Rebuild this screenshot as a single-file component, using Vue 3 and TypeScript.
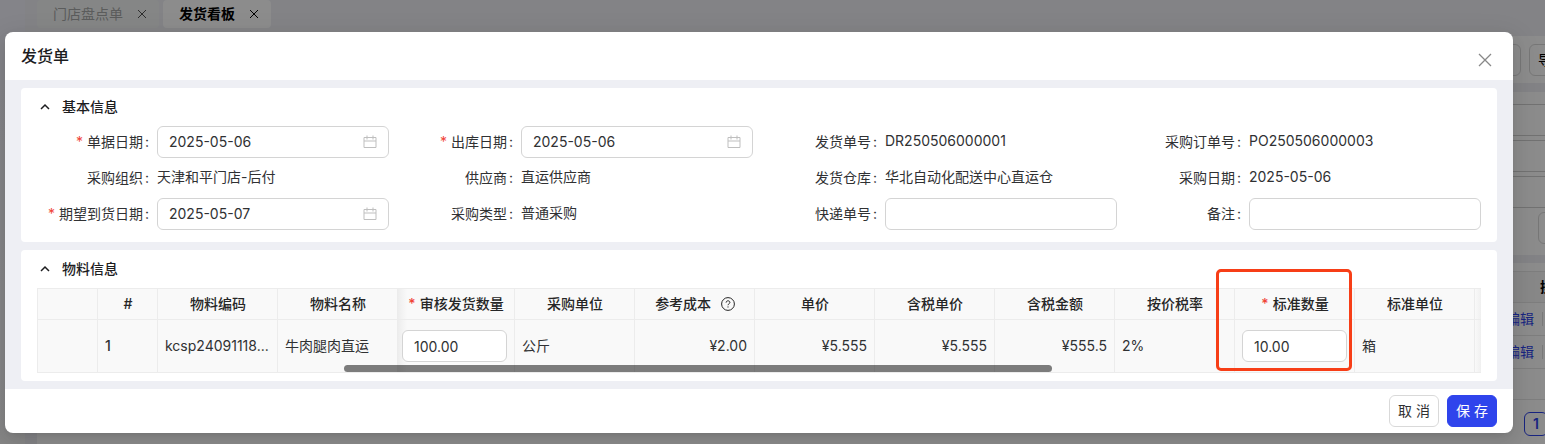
<script setup lang="ts">
import { reactive } from 'vue'

interface Field {
  key: string
  label: string
  value: string
  kind: 'date' | 'input' | 'text'
  required?: boolean
}

interface Column {
  key: string
  title: string
  width?: number
  align?: 'left' | 'right'
  required?: boolean
  help?: boolean
  input?: boolean
}

const fields = reactive<Field[]>([
  { key: 'billDate', label: '单据日期', value: '2025-05-06', kind: 'date', required: true },
  { key: 'outDate', label: '出库日期', value: '2025-05-06', kind: 'date', required: true },
  { key: 'deliveryNo', label: '发货单号', value: 'DR250506000001', kind: 'text' },
  { key: 'purchaseNo', label: '采购订单号', value: 'PO250506000003', kind: 'text' },
  { key: 'org', label: '采购组织', value: '天津和平门店-后付', kind: 'text' },
  { key: 'supplier', label: '供应商', value: '直运供应商', kind: 'text' },
  { key: 'warehouse', label: '发货仓库', value: '华北自动化配送中心直运仓', kind: 'text' },
  { key: 'purchaseDate', label: '采购日期', value: '2025-05-06', kind: 'text' },
  { key: 'expectDate', label: '期望到货日期', value: '2025-05-07', kind: 'date', required: true },
  { key: 'purchaseType', label: '采购类型', value: '普通采购', kind: 'text' },
  { key: 'expressNo', label: '快递单号', value: '', kind: 'input' },
  { key: 'remark', label: '备注', value: '', kind: 'input' },
])

const columns: Column[] = [
  { key: 'select', title: '', width: 61 },
  { key: 'index', title: '#', width: 60 },
  { key: 'code', title: '物料编码', width: 120 },
  { key: 'name', title: '物料名称', width: 120 },
  { key: 'auditQty', title: '审核发货数量', width: 117, required: true, input: true },
  { key: 'unit', title: '采购单位', width: 120 },
  { key: 'cost', title: '参考成本', width: 120, align: 'right', help: true },
  { key: 'price', title: '单价', width: 120, align: 'right' },
  { key: 'taxPrice', title: '含税单价', width: 120, align: 'right' },
  { key: 'taxAmount', title: '含税金额', width: 120, align: 'right' },
  { key: 'taxRate', title: '按价税率', width: 120 },
  { key: 'stdQty', title: '标准数量', width: 120, required: true, input: true },
  { key: 'stdUnit', title: '标准单位', width: 120 },
  { key: 'action', title: '' },
]

const rows = reactive<Record<string, string>[]>([
  {
    select: '',
    index: '1',
    code: 'kcsp24091118...',
    name: '牛肉腿肉直运',
    auditQty: '100.00',
    unit: '公斤',
    cost: '¥2.00',
    price: '¥5.555',
    taxPrice: '¥5.555',
    taxAmount: '¥555.5',
    taxRate: '2%',
    stdQty: '10.00',
    stdUnit: '箱',
    action: '',
  },
])
</script>

<template>
  <div class="app">
    <div class="page">
      <aside class="sidebar"></aside>
      <div class="workspace">
        <nav class="tabs">
          <div class="tab">
            <span>门店盘点单</span>
            <svg viewBox="0 0 10 10"><path d="M1 1l8 8M9 1l-8 8" /></svg>
          </div>
          <div class="tab active">
            <span>发货看板</span>
            <svg viewBox="0 0 10 10"><path d="M1 1l8 8M9 1l-8 8" /></svg>
          </div>
        </nav>
        <div class="panel toolbar">
          <button type="button" class="btn"></button>
          <button type="button" class="btn">导</button>
        </div>
        <div class="panel filters">
          <div class="filter-line"></div>
          <div class="filter-line"></div>
          <div class="filter-line"></div>
          <button type="button" class="btn"></button>
        </div>
        <div class="panel list">
          <div class="list-row head"><span>操</span></div>
          <div class="list-row"><a href="#">编辑</a><i></i></div>
          <div class="list-row"><a href="#">编辑</a><i></i></div>
          <div class="list-row last"></div>
          <div class="pager">
            <svg viewBox="0 0 10 10"><path d="M7 1L3 5l4 4" /></svg>
            <button type="button">1</button>
          </div>
        </div>
      </div>
    </div>

    <div class="mask">
      <section class="modal" role="dialog" aria-labelledby="modal-title">
        <header class="modal-header">
          <h1 id="modal-title">发货单</h1>
          <button type="button" class="close" aria-label="关闭">
            <svg viewBox="0 0 14 14"><path d="M1 1l12 12M13 1L1 13" /></svg>
          </button>
        </header>

        <div class="modal-body">
          <section class="card basic">
            <button type="button" class="card-title">
              <svg viewBox="0 0 10 10"><path d="M1 7l4-4 4 4" /></svg>
              <span>基本信息</span>
            </button>
            <form class="form">
              <div v-for="f in fields" :key="f.key" class="field">
                <component :is="f.kind === 'text' ? 'span' : 'label'" class="label" :for="f.kind === 'text' ? undefined : f.key">
                  <em v-if="f.required">*</em>{{ f.label }}<b>:</b>
                </component>
                <span v-if="f.kind === 'text'" class="value">{{ f.value }}</span>
                <div v-else class="control">
                  <input :id="f.key" v-model="f.value" type="text" />
                  <svg v-if="f.kind === 'date'" viewBox="0 0 14 14">
                    <path d="M1 2.5h12v10H1zM1 6h12M4 .5v4M10 .5v4" />
                  </svg>
                </div>
              </div>
            </form>
          </section>

          <section class="card">
            <button type="button" class="card-title">
              <svg viewBox="0 0 10 10"><path d="M1 7l4-4 4 4" /></svg>
              <span>物料信息</span>
            </button>
            <div class="table-wrap">
              <table>
                <colgroup>
                  <col v-for="c in columns" :key="c.key" :style="c.width ? { width: c.width + 'px' } : {}" />
                </colgroup>
                <thead>
                  <tr>
                    <th v-for="c in columns" :key="c.key" :class="c.key">
                      <em v-if="c.required">*</em>{{ c.title }}
                      <svg v-if="c.help" class="help" viewBox="0 0 14 14">
                        <circle cx="7" cy="7" r="6.4" />
                        <path d="M5.1 5.6c0-1 .8-1.8 1.9-1.8s1.9.7 1.9 1.7c0 1.2-1.9 1.3-1.9 2.7" />
                        <path d="M7 9.4v1.1" />
                      </svg>
                    </th>
                  </tr>
                </thead>
                <tbody>
                  <tr v-for="(row, i) in rows" :key="i">
                    <td v-for="c in columns" :key="c.key" :class="[c.key, c.align]">
                      <input v-if="c.input" v-model="row[c.key]" type="text" :aria-label="c.title" />
                      <template v-else>{{ row[c.key] }}</template>
                    </td>
                  </tr>
                </tbody>
              </table>
              <div class="scrollbar"></div>
              <div class="highlight"></div>
            </div>
          </section>
        </div>

        <footer class="modal-footer">
          <button type="button" class="btn">取 消</button>
          <button type="button" class="btn primary">保 存</button>
        </footer>
      </section>
    </div>
  </div>
</template>

<style>
body {
  margin: 0;
}
</style>

<style scoped>
.app,
.app * {
  box-sizing: border-box;
}
.app {
  position: relative;
  min-height: 100vh;
  overflow: hidden;
  font-family: Inter, "Noto Sans CJK SC", sans-serif;
  font-size: 14px;
  line-height: 22px;
  color: #303133;
}
button,
input {
  font: inherit;
  color: inherit;
}
svg {
  fill: none;
  stroke: currentColor;
  flex: none;
}
em {
  font-style: normal;
  color: #f04438;
}
.btn {
  height: 32px;
  padding: 0 8px;
  border: 1px solid #d9d9d9;
  border-radius: 6px;
  background: #fff;
  white-space: nowrap;
}
.btn.primary {
  border-color: #2f44ec;
  background: #2f44ec;
  color: #fff;
}

/* page behind the dialog */
.page {
  display: flex;
  height: 100vh;
  overflow: hidden;
  background: #eeeff4;
}
.sidebar {
  flex: none;
  width: 25px;
  background: linear-gradient(#f0f0fa, #f6f6f6);
}
.workspace {
  flex: 1;
  display: flex;
  flex-direction: column;
  margin: 0 -60px 0 12px;
}
.tabs {
  display: flex;
  gap: 4px;
  height: 36px;
  align-items: flex-start;
}
.tab {
  display: flex;
  align-items: center;
  gap: 14px;
  height: 28px;
  padding: 0 12px 0 16px;
  border-radius: 4px;
  background: #f3f5f4;
  color: #a6a8a8;
}
.tab.active {
  background: #fff;
  color: #000;
  font-weight: 700;
}
.tab svg {
  width: 10px;
  height: 10px;
  color: #555;
}
.tab.active svg {
  color: #000;
}
.panel {
  background: #fff;
}
.panel .btn {
  width: 60px;
  color: #000;
  text-align: left;
}
.toolbar {
  display: flex;
  justify-content: flex-end;
  gap: 8px;
  padding: 8px 16px 7px;
  margin-bottom: 9px;
}
.filters {
  display: flex;
  flex-direction: column;
  align-items: flex-end;
  gap: 4px;
  padding: 12px 7px 11px;
  margin-bottom: 8px;
}
.filter-line {
  width: 300px;
  height: 32px;
  border: 1px solid #d0d0d0;
  border-radius: 6px;
}
.list {
  flex: 1;
  padding-top: 8px;
}
.list-row {
  display: flex;
  align-items: center;
  justify-content: flex-end;
  gap: 8px;
  height: 33px;
  padding-right: 62px;
  border-bottom: 1px solid #e6e6e6;
}
.list-row.head {
  height: 32px;
  padding-right: 51px;
  border-top: 1px solid #e6e6e6;
  background: #f8f8f8;
  color: #000;
  font-weight: 600;
}
.list-row.last {
  height: 31px;
}
.list-row a {
  color: #2f44ec;
  text-decoration: none;
}
.list-row i {
  width: 1px;
  height: 14px;
  background: #ddd;
}
.pager {
  display: flex;
  align-items: center;
  justify-content: flex-end;
  gap: 8px;
  padding: 12px 57px 0 0;
}
.pager svg {
  width: 10px;
  height: 10px;
  color: #999;
}
.pager button {
  width: 24px;
  height: 24px;
  padding: 0;
  border: 1px solid #2f44ec;
  border-radius: 6px;
  background: #fff;
  color: #2f44ec;
  font-weight: 600;
}

/* dialog */
.mask {
  position: absolute;
  inset: 0;
  padding: 32px 32px 11px 5px;
  background: rgba(0, 0, 0, 0.45);
}
.modal {
  position: relative;
  border-radius: 8px;
  overflow: hidden;
  background: #fff;
  box-shadow: 0 6px 16px rgba(0, 0, 0, 0.08), 0 3px 6px -4px rgba(0, 0, 0, 0.12), 0 9px 28px 8px rgba(0, 0, 0, 0.05);
}
.modal-header {
  display: flex;
  align-items: center;
  height: 48px;
  padding: 0 16px;
}
h1 {
  margin: 0;
  font-size: 16px;
  font-weight: 500;
  line-height: 24px;
  color: #1d1d1f;
}
.close {
  position: absolute;
  top: 17px;
  right: 17px;
  display: flex;
  align-items: center;
  justify-content: center;
  width: 22px;
  height: 22px;
  padding: 0;
  border: 0;
  background: none;
  color: #888;
}
.close svg {
  width: 14px;
  height: 14px;
  stroke-width: 1.3;
}
.modal-body {
  display: flex;
  flex-direction: column;
  gap: 8px;
  padding: 8px 16px;
  background: #eeeff4;
}
.card {
  padding: 8px 16px;
  border-radius: 4px;
  background: #fff;
}
.card.basic {
  padding-bottom: 12px;
}
.card-title {
  display: flex;
  align-items: center;
  gap: 12px;
  height: 22px;
  margin: 0 0 8px;
  padding: 0 3px;
  border: 0;
  background: none;
  font-weight: 500;
  color: #1d1d1f;
}
.card-title svg {
  width: 10px;
  height: 10px;
  stroke-width: 1.5;
}
.form {
  display: grid;
  grid-template-columns: repeat(4, minmax(0, 1fr));
  gap: 4px 12px;
}
.field {
  display: flex;
  gap: 8px;
  height: 32px;
}
.label {
  flex: none;
  width: 112px;
  line-height: 32px;
  text-align: right;
  white-space: nowrap;
}
.label em {
  margin-right: 4px;
}
.label b {
  margin-left: 2px;
  font-weight: 400;
}
.value {
  line-height: 30px;
  white-space: nowrap;
}
.control {
  flex: 1;
  display: flex;
  align-items: center;
  min-width: 0;
  padding: 0 11px;
  border: 1px solid #d4d4d4;
  border-radius: 6px;
}
.control input {
  flex: 1;
  min-width: 0;
  padding: 0;
  border: 0;
  outline: 0;
  background: none;
}
.control svg {
  width: 14px;
  height: 14px;
  color: #bfbfbf;
}

/* material table */
.table-wrap {
  position: relative;
}
table {
  width: 100%;
  table-layout: fixed;
  border-collapse: separate;
  border-spacing: 0;
  border-top: 1px solid #ececec;
  background: #f9f9f9;
}
th,
td {
  height: 31px;
  padding: 0 7px;
  border-right: 1px solid #ececec;
  border-bottom: 1px solid #ececec;
  white-space: nowrap;
}
th {
  padding-left: 8px;
  text-align: center;
  font-weight: 500;
  color: #262626;
}
th em {
  margin-right: 4px;
}
td {
  height: 53px;
  text-align: left;
}
td.right {
  text-align: right;
}
td.index {
  font-weight: 500;
}
.select {
  border-left: 1px solid #ececec;
}
.action {
  padding: 0;
  border-right: 0;
}
th.auditQty,
td.auditQty {
  padding-left: 4px;
  padding-right: 7px;
  background: linear-gradient(to right, #ededed, #f9f9f9 9px);
}
th.auditQty {
  padding-right: 4px;
}
th.action,
td.action {
  background: linear-gradient(to left, #f0f0f0, #f9f9f9);
}
td input {
  display: block;
  width: 100%;
  height: 32px;
  padding: 0 11px;
  border: 1px solid #d4d4d4;
  border-radius: 6px;
  background: #fff;
}
.help {
  width: 14px;
  height: 14px;
  margin-left: 6px;
  vertical-align: -2px;
}
.scrollbar {
  position: absolute;
  bottom: 1px;
  left: 307px;
  width: 49%;
  height: 7px;
  border-radius: 4px;
  background: rgba(0, 0, 0, 0.5);
}
.highlight {
  position: absolute;
  top: -19px;
  right: 129px;
  width: 136px;
  height: 102px;
  border: 3px solid #f73e17;
  border-radius: 5px;
  pointer-events: none;
}
.modal-footer {
  display: flex;
  justify-content: flex-end;
  gap: 8px;
  padding: 6px 16px;
}
.modal-footer .btn {
  width: 50px;
}
</style>
